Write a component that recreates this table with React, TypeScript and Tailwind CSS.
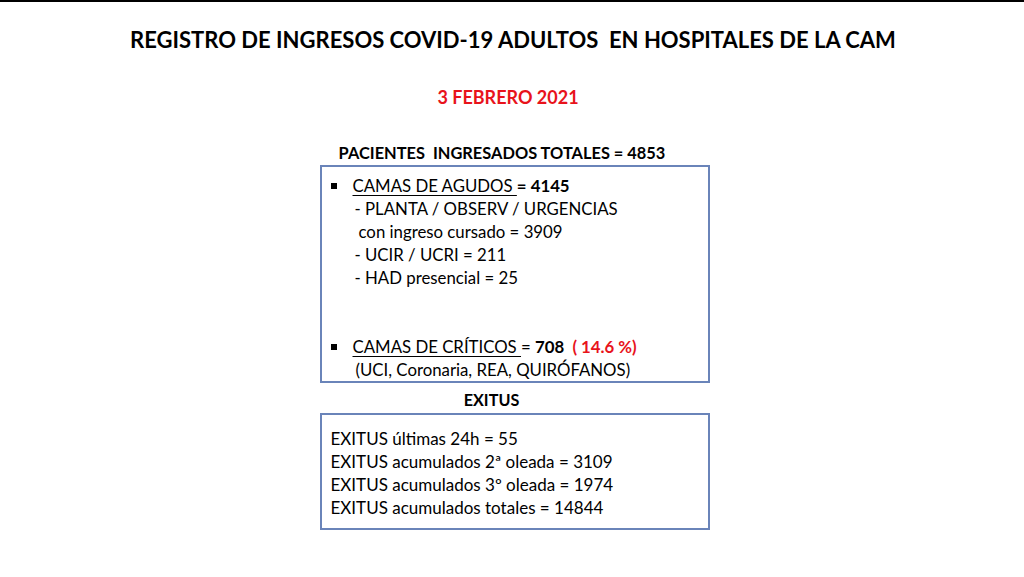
const Line = ({ children, className = "" }: { children: React.ReactNode; className?: string }) => (
  <div className={`h-[23px] leading-[23px] whitespace-pre ${className}`}>{children}</div>
)

const Bullet = () => <span className="inline-block w-[6px] h-[6px] bg-black mr-[16px] mb-[3px] align-middle" />

const App = () => {
  return (
    <div
      className="w-[1024px] h-[577px] bg-white border-t-2 border-black text-black overflow-hidden"
      style={{ fontFamily: "Lato, 'Liberation Sans', sans-serif" }}
    >
      <div className="flex flex-col items-center">
        <h1 className="mt-[24px] ml-[2px] text-[22px] leading-[28px] font-bold whitespace-pre">
          REGISTRO DE INGRESOS COVID-19 ADULTOS  EN HOSPITALES DE LA CAM
        </h1>
        <div className="mt-[32px] -ml-[8px] text-[18px] leading-[22px] font-bold text-[#e8131b]">3 FEBRERO 2021</div>

        <div className="mt-[34px] -ml-[20px] text-[16.4px] leading-[22px] font-bold whitespace-pre">
          PACIENTES  INGRESADOS TOTALES = 4853
        </div>

        <div className="mt-[1px] ml-[5px] w-[390px] h-[218px] border-2 border-[#6a84b9] pl-[9px] pt-[7px] text-[16.8px]">
          <Line>
            <Bullet />
            <span className="underline underline-offset-[3px] decoration-1">CAMAS DE AGUDOS </span>
            <span className="font-bold">= 4145</span>
          </Line>
          <Line className="pl-[24px]">- PLANTA / OBSERV / URGENCIAS</Line>
          <Line className="pl-[28px]">con ingreso cursado = 3909</Line>
          <Line className="pl-[24px]">- UCIR / UCRI = 211</Line>
          <Line className="pl-[24px]">- HAD presencial = 25</Line>
          <Line> </Line>
          <Line> </Line>
          <Line>
            <Bullet />
            <span className="underline underline-offset-[3px] decoration-1">CAMAS DE CRÍTICOS </span>
            <span>= </span>
            <span className="font-bold">708  </span>
            <span className="font-bold text-[#e8131b]">( 14.6 %)</span>
          </Line>
          <Line className="pl-[25px]">(UCI, Coronaria, REA, QUIRÓFANOS)</Line>
        </div>

        <div className="mt-[6px] -ml-[41px] text-[16.2px] leading-[22px] font-bold">EXITUS</div>

        <div className="mt-[2px] ml-[5px] w-[390px] h-[117px] border-2 border-[#6a84b9] pl-[9px] pt-[12px] text-[17px]">
          <Line>EXITUS últimas 24h = 55</Line>
          <Line>EXITUS acumulados 2ª oleada = 3109</Line>
          <Line>EXITUS acumulados 3º oleada = 1974</Line>
          <Line>EXITUS acumulados totales = 14844</Line>
        </div>
      </div>
    </div>
  )
}

export default App
